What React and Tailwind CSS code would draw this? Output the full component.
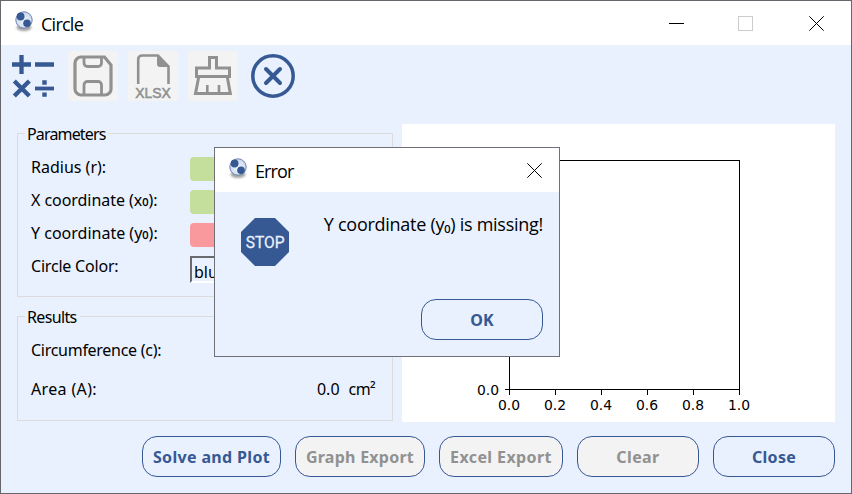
import React from 'react';

const BLUE = '#365893';
const GREY = '#919191';
const LABEL = "font-['Noto_Sans','Open_Sans',sans-serif] text-[16px] leading-[20px] whitespace-pre";
const UI = "font-['Open_Sans','Noto_Sans',sans-serif] text-[18px] leading-[24px] whitespace-pre";

function AppIcon() {
  return (
    <svg width="20" height="24" viewBox="0 0 20 24" className="block">
      <defs>
        <filter id="soft" x="-30%" y="-60%" width="160%" height="220%">
          <feGaussianBlur stdDeviation="1.2" />
        </filter>
        <radialGradient id="ball" cx="0.5" cy="0.55" r="0.6">
          <stop offset="0" stopColor="#f4f8ff" />
          <stop offset="1" stopColor="#c3d2ec" />
        </radialGradient>
      </defs>
      <ellipse cx="10" cy="17.5" rx="7.5" ry="3.5" fill="#555" opacity="0.55" filter="url(#soft)" />
      <circle cx="10" cy="10" r="8.2" fill="url(#ball)" stroke="#7187b1" strokeWidth="1" />
      <circle cx="6.6" cy="6.5" r="3.9" fill={BLUE} />
      <circle cx="13" cy="13.2" r="3.8" fill={BLUE} />
    </svg>
  );
}

function CloseGlyph() {
  return (
    <svg width="15" height="15" viewBox="0 0 15 15" className="mr-[1px] block">
      <path d="M.3.3l14.400 14.400M14.700.3L.3 14.700" stroke="#000" strokeWidth="1" fill="none" />
    </svg>
  );
}

function MathIcon() {
  return (
    <svg width="50" height="50" viewBox="0 0 50 50" fill="none" stroke={BLUE} strokeWidth="4.3">
      <path d="M4 13.5H23M13.5 4V23M27 13.5H46M6.300 30l15 15M21.300 30L6.300 45" />
      <path d="M27 37.500H46" strokeWidth="3.800" />
      <path d="M34.300 29.300h4.400v4.400h-4.400zM34.300 41.400h4.400v4.400h-4.400z" fill={BLUE} stroke="none" />
    </svg>
  );
}

function SaveIcon() {
  return (
    <svg width="50" height="50" viewBox="0 0 50 50" fill="none" stroke={GREY} strokeWidth="3.2">
      <path d="M13 6h23.5l6.5 8v24a6 6 0 0 1-6 6H13a6 6 0 0 1-6-6V12a6 6 0 0 1 6-6z" />
      <path d="M16 6v6a3.5 3.5 0 0 0 3.5 3.5H30a3.5 3.5 0 0 0 3.5-3.5V6" strokeWidth="2.8" />
      <path d="M16 44V34a3.5 3.5 0 0 1 3.5-3.5H30a3.5 3.5 0 0 1 3.5 3.5v10" strokeWidth="2.8" />
    </svg>
  );
}

function XlsxIcon() {
  return (
    <svg width="50" height="50" viewBox="0 0 50 50">
      <path d="M10.2 33V8a4 4 0 0 1 4-3.5H30L40.5 15.5V33" fill="none" stroke={GREY} strokeWidth="2.6" />
      <path d="M29 4.5v8.5a3 3 0 0 0 3 3h9.5z" fill={GREY} />
      <text x="7.300" y="46.600" textLength="35.500" lengthAdjust="spacingAndGlyphs" fill={GREY} stroke={GREY} strokeWidth="0.600" fontFamily="Liberation Sans" fontSize="15.5">XLSX</text>
    </svg>
  );
}

function BrushIcon() {
  return (
    <svg width="50" height="50" viewBox="0 0 50 50" fill="none" stroke={GREY} strokeWidth="3">
      <path d="M21.500 17V6.500h7V17H41.500v8.500h-33V17z" />
      <path d="M10.800 25.500L7.500 42.500h34.800l-3.100-17" />
      <path d="M19.300 42v-8M31 42v-8" strokeWidth="2.600" />
    </svg>
  );
}

function CancelIcon() {
  return (
    <svg width="50" height="50" viewBox="0 0 50 50" fill="none" stroke={BLUE}>
      <circle cx="25" cy="25" r="20.2" strokeWidth="3.500" />
      <path d="M18 18l14 14M32 18L18 32" strokeWidth="4" strokeLinecap="round" />
    </svg>
  );
}

function Tool({ disabled, children }) {
  return (
    <button className={'h-[50px] w-[50px] rounded-[2px] ' + (disabled ? 'bg-[#f3f3f3]' : '')}>{children}</button>
  );
}

function PillButton({ width, spacing, disabled, children }) {
  return (
    <button
      className={
        "h-[41px] shrink-0 rounded-[15px] border border-[#365893] pt-[1px] font-['Noto_Sans',sans-serif] text-[16px] font-bold whitespace-pre " +
        width + ' ' + spacing + ' ' +
        (disabled ? 'bg-[#f3f3f3] text-[#919191]' : 'bg-[#e9f1ff] text-[#365893]')
      }
    >
      {children}
    </button>
  );
}

function Group({ title, className, titleSpacing, children }) {
  return (
    <section className={'relative border border-[#dcdcdc] ' + className}>
      <h2 className={'absolute -top-[10px] left-[7px] bg-[#e9f1ff] pr-[3px] pl-[2px] ' + LABEL + ' ' + titleSpacing}>{title}</h2>
      {children}
    </section>
  );
}

function Sub() {
  return <span className="relative -top-[2px] text-[18px] leading-[0]">₀</span>;
}

function Plot() {
  const ticks = ['0.0', '0.2', '0.4', '0.6', '0.8', '1.0'];
  return (
    <svg width="433" height="298" viewBox="0 0 433 298" className="block bg-white">
      <g fill="none" stroke="#000" strokeWidth="1" shapeRendering="crispEdges">
        <rect x="107.500" y="36.500" width="230" height="229" />
        <path d="M102.500 265.500h5" />
        {ticks.map((t, i) => (
          <path key={t} d={`M${107.5 + 46 * i} 265.500v5`} />
        ))}
      </g>
      <g fontFamily="DejaVu Sans" fontSize="13.900" fill="#000">
        {ticks.map((t, i) => (
          <text key={t} x={107 + 46 * i} y="286" textAnchor="middle">{t}</text>
        ))}
        <text x="97" y="271" textAnchor="end">0.0</text>
      </g>
    </svg>
  );
}

function ErrorDialog() {
  return (
    <div className="absolute top-[146px] left-[213px] flex h-[210px] w-[346px] flex-col border border-[#707178] bg-[#e9f1ff]">
      <div className="flex h-[44px] shrink-0 items-center bg-white pr-[16px] pl-[13px]">
        <div className="-mt-[3px]"><AppIcon /></div>
        <span className={UI + ' ml-[7px] tracking-[-0.9px] mt-[2px]'}>Error</span>
        <div className="ml-auto"><CloseGlyph /></div>
      </div>
      <div className="flex justify-between pr-[16px] pl-[26px]">
        <svg width="48" height="48" viewBox="0 0 48 48" className="mt-[26px] block">
          <path d="M14 0h20l14 14v20L34 48H14L0 34V14z" fill={BLUE} />
          <text x="4.800" y="30.200" textLength="38.800" lengthAdjust="spacingAndGlyphs" fill="#e9f1ff" stroke="#e9f1ff" strokeWidth="0.300" fontFamily="Roboto" fontWeight="400" fontSize="17.200">STOP</text>
        </svg>
        <p className={UI + ' mt-[20px] tracking-[-0.27px]'}>Y coordinate (y₀) is missing!</p>
      </div>
      <div className="mt-auto flex justify-end pr-[16px] pb-[16px]">
        <PillButton width="w-[122px]" spacing="tracking-[0px]">OK</PillButton>
      </div>
    </div>
  );
}

export default function App() {
  return (
    <main className="relative flex h-[494px] w-[852px] flex-col overflow-hidden border border-[#66676d] bg-[#e9f1ff] text-black">
      <header className="flex h-[44px] shrink-0 items-center bg-white pr-[26px] pl-[13px]">
        <div className="-mt-[3px]"><AppIcon /></div>
        <h1 className={UI + ' ml-[7px] mt-[1px] tracking-[-0.75px]'}>Circle</h1>
        <div className="ml-auto flex items-center">
          <div className="h-px w-[15px] bg-black" />
          <div className="ml-[54px] h-[15px] w-[15px] border border-[#cccccc]" />
          <div className="ml-[56px]"><CloseGlyph /></div>
        </div>
      </header>
      <nav className="mt-[6px] flex h-[50px] shrink-0 gap-[10px] pl-[7px]">
        <Tool><MathIcon /></Tool>
        <Tool disabled><SaveIcon /></Tool>
        <Tool disabled><XlsxIcon /></Tool>
        <Tool disabled><BrushIcon /></Tool>
        <Tool><CancelIcon /></Tool>
      </nav>
      <div className="mt-[23px] flex shrink-0 pl-[16px]">
        <div className="flex w-[376px] flex-col pt-[9px]">
          <Group title="Parameters" className="h-[164px]" titleSpacing="tracking-[-0.85px]">
            <div className="grid grid-cols-[159px_1fr] gap-y-[9px] pt-[23px] pr-[16px] pl-[13px]">
              <label className={LABEL + ' h-[24px] tracking-[0px]'}>Radius (r):</label>
              <div className="h-[24px] rounded-[4px] bg-[#c4df9b]" />
              <label className={LABEL + ' h-[24px] tracking-[-0.05px]'}>X coordinate (x<Sub />):</label>
              <div className="h-[24px] rounded-[4px] bg-[#c4df9b]" />
              <label className={LABEL + ' h-[24px] tracking-[0px]'}>Y coordinate (y<Sub />):</label>
              <div className="h-[24px] rounded-[4px] bg-[#f9999d]" />
              <label className={LABEL + ' h-[24px] tracking-[-0.2px]'}>Circle Color:</label>
              <div className="h-[27px] border-t-2 border-l-2 border-b-2 border-t-[#696a70] border-l-[#696a70] border-b-white pt-[2px] pl-[2px]">
                <span className={LABEL}>blue</span>
              </div>
            </div>
          </Group>
          <Group title="Results" className="mt-[19px] h-[105px]" titleSpacing="tracking-[-0.65px]">
            <div className="flex flex-col gap-[19px] pt-[23px] pr-[17px] pl-[13px]">
              <span className={LABEL + ' tracking-[-0.28px]'}>Circumference (c):</span>
              <div className={'flex ' + LABEL}>
                <span className="tracking-[0.35px]">Area (A):</span>
                <span className="ml-auto">0.0</span>
                <span className="ml-[9px] tracking-[-0.6px]">cm²</span>
              </div>
            </div>
          </Group>
        </div>
        <div className="ml-[9px]"><Plot /></div>
      </div>
      <footer className="mt-[14px] flex justify-end gap-[14px] pr-[16px]">
        <PillButton width="w-[139px]" spacing="tracking-[0.35px]">Solve and Plot</PillButton>
        <PillButton width="w-[130px]" spacing="tracking-[0.25px]" disabled>Graph Export</PillButton>
        <PillButton width="w-[124px]" spacing="tracking-[0.4px]" disabled>Excel Export</PillButton>
        <PillButton width="w-[122px]" spacing="tracking-[0.4px]" disabled>Clear</PillButton>
        <PillButton width="w-[122px]" spacing="tracking-[0.3px]">Close</PillButton>
      </footer>
      <ErrorDialog />
    </main>
  );
}
